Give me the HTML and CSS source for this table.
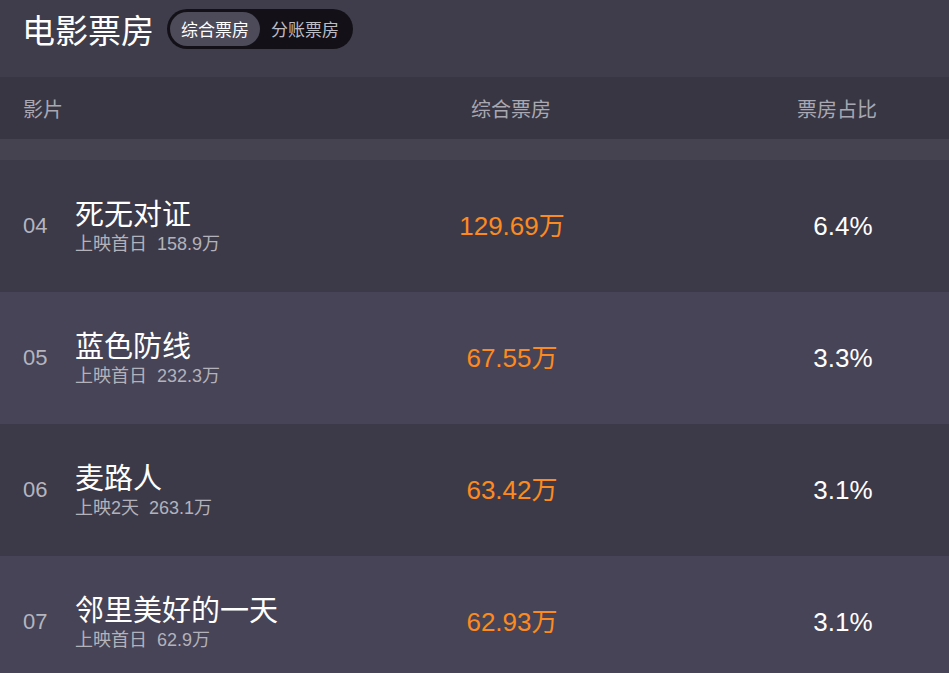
FILE: index.html
```html
<!DOCTYPE html>
<html lang="zh">
<head>
<meta charset="utf-8">
<title>电影票房</title>
<link rel="stylesheet" href="styles.css">
</head>
<body>
<div class="page">
  <header class="topbar">
    <h1 class="title">电影票房</h1>
    <div class="toggle">
      <span class="toggle-item active">综合票房</span>
      <span class="toggle-item">分账票房</span>
    </div>
  </header>
  <div class="thead">
    <span class="th th-name">影片</span>
    <span class="th th-center">综合票房</span>
    <span class="th th-center">票房占比</span>
  </div>
  <div class="band"></div>
  <div class="rows">
    <div class="row dark">
      <div class="cell-name">
        <span class="rank">04</span>
        <div class="movie">
          <div class="movie-name">死无对证</div>
          <div class="movie-sub">上映首日<span class="sub-num">158.9万</span></div>
        </div>
      </div>
      <div class="box">129.69万</div>
      <div class="pct">6.4%</div>
    </div>
    <div class="row light">
      <div class="cell-name">
        <span class="rank">05</span>
        <div class="movie">
          <div class="movie-name">蓝色防线</div>
          <div class="movie-sub">上映首日<span class="sub-num">232.3万</span></div>
        </div>
      </div>
      <div class="box">67.55万</div>
      <div class="pct">3.3%</div>
    </div>
    <div class="row dark">
      <div class="cell-name">
        <span class="rank">06</span>
        <div class="movie">
          <div class="movie-name">麦路人</div>
          <div class="movie-sub">上映2天<span class="sub-num">263.1万</span></div>
        </div>
      </div>
      <div class="box">63.42万</div>
      <div class="pct">3.1%</div>
    </div>
    <div class="row light">
      <div class="cell-name">
        <span class="rank">07</span>
        <div class="movie">
          <div class="movie-name">邻里美好的一天</div>
          <div class="movie-sub">上映首日<span class="sub-num">62.9万</span></div>
        </div>
      </div>
      <div class="box">62.93万</div>
      <div class="pct">3.1%</div>
    </div>
  </div>
</div>
</body>
</html>
```
FILE: styles.css
```css
* { box-sizing: border-box; margin: 0; padding: 0; }
html, body {
  background: #464456;
  font-family: "Liberation Sans", "Noto Sans CJK SC", sans-serif;
  overflow: hidden;
}
.page { width: 949px; }

.topbar {
  height: 77px;
  background: #3f3d4b;
  display: flex;
  align-items: flex-start;
  padding: 9px 0 0 22px;
  gap: 13px;
}
.title {
  font-family: "Noto Sans CJK SC", sans-serif;
  font-weight: 400;
  font-size: 33px;
  line-height: 40px;
  color: #ffffff;
}
.toggle {
  display: flex;
  align-items: center;
  height: 40px;
  padding: 3px;
  border-radius: 20px;
  background: #131117;
}
.toggle-item {
  font-family: "Noto Sans CJK SC", sans-serif;
  font-size: 17px;
  line-height: 34px;
  height: 34px;
  padding: 0 11px;
  border-radius: 17px;
  color: #bdbcc4;
}
.toggle-item.active {
  background: #4d4a59;
  color: #ffffff;
}

.thead {
  height: 62px;
  background: #383643;
  display: grid;
  grid-template-columns: 1fr 200px 200px;
  column-gap: 126px;
  padding: 0 12px 0 23px;
  align-items: center;
}
.th {
  font-family: "Noto Sans CJK SC", sans-serif;
  font-size: 20px;
  color: #a9a8b2;
}
.th-center { text-align: center; }

.band {
  height: 21px;
  background: #45434f;
}

.row {
  height: 132px;
  display: grid;
  grid-template-columns: 1fr 200px 200px;
  column-gap: 131px;
  padding: 0 6px 0 23px;
  align-items: center;
}
.row.dark { background: #3c3a49; }
.row.light { background: #464456; }

.cell-name {
  display: flex;
  align-items: center;
}
.rank {
  width: 52px;
  font-size: 22px;
  color: #b6b5bd;
}
.movie { display: flex; flex-direction: column; }
.movie-name {
  font-family: "Noto Sans CJK SC", sans-serif;
  font-size: 29px;
  line-height: 36px;
  color: #ffffff;
}
.movie-sub {
  font-size: 18px;
  line-height: 28px;
  color: #b3b2ba;
}
.sub-num { margin-left: 10px; }

.box {
  text-align: center;
  font-size: 26px;
  line-height: 30px;
  padding-bottom: 1px;
  color: #fd8a1e;
}
.pct {
  text-align: center;
  font-size: 26px;
  line-height: 30px;
  color: #ffffff;
}
```
